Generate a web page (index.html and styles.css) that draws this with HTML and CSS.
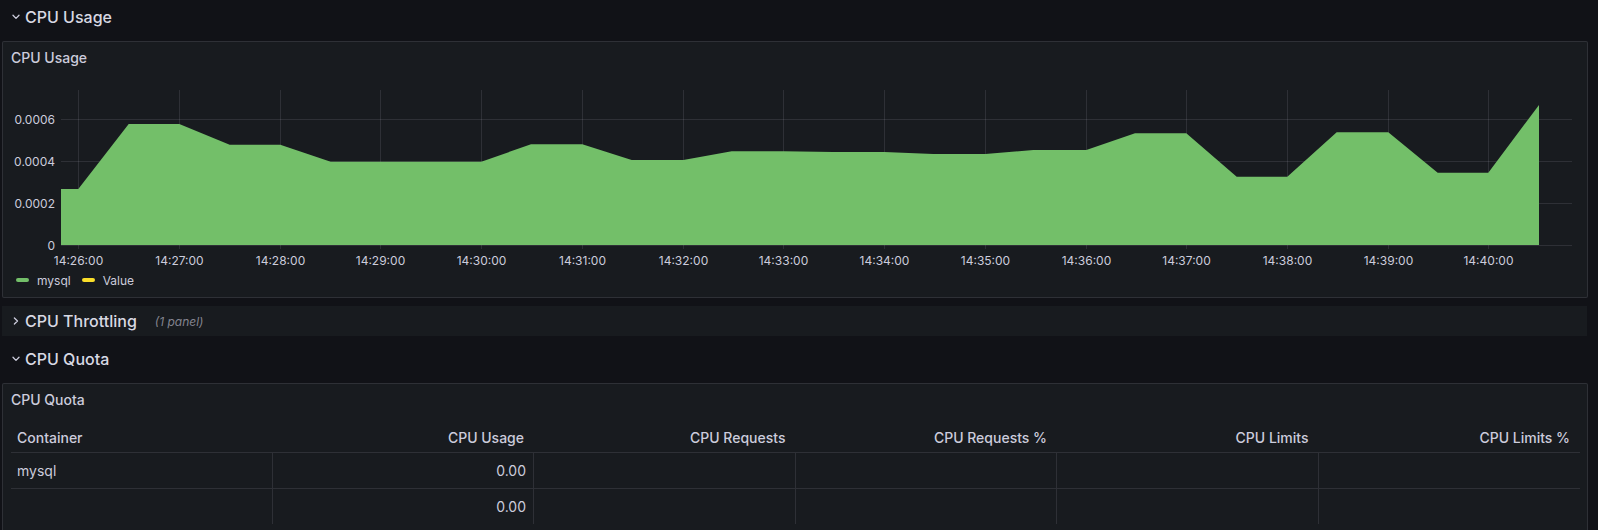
FILE: index.html
```html
<!DOCTYPE html>
<html lang="en">
<head>
<meta charset="utf-8">
<title>CPU dashboard</title>
<link rel="stylesheet" href="styles.css">
</head>
<body>
<div class="dash">
  <div class="row-header">
    <svg class="chev" width="8" height="8" viewBox="0 0 8 8"><path d="M1 2.3 L4 5.4 L7 2.3" /></svg>
    <span class="row-title">CPU Usage</span>
  </div>

  <section class="panel panel-graph">
    <div class="panel-head">CPU Usage</div>
    <svg class="chart" width="1584" height="195" viewBox="3 73 1584 195">
      <g class="grid">
        <line x1="61" y1="119.5" x2="1572" y2="119.5"/>
        <line x1="61" y1="161.5" x2="1572" y2="161.5"/>
        <line x1="61" y1="203.5" x2="1572" y2="203.5"/>
        <line x1="78.5" y1="90" x2="78.5" y2="249"/>
        <line x1="179.5" y1="90" x2="179.5" y2="249"/>
        <line x1="280.5" y1="90" x2="280.5" y2="249"/>
        <line x1="380.5" y1="90" x2="380.5" y2="249"/>
        <line x1="481.5" y1="90" x2="481.5" y2="249"/>
        <line x1="582.5" y1="90" x2="582.5" y2="249"/>
        <line x1="683.5" y1="90" x2="683.5" y2="249"/>
        <line x1="783.5" y1="90" x2="783.5" y2="249"/>
        <line x1="884.5" y1="90" x2="884.5" y2="249"/>
        <line x1="985.5" y1="90" x2="985.5" y2="249"/>
        <line x1="1086.5" y1="90" x2="1086.5" y2="249"/>
        <line x1="1186.5" y1="90" x2="1186.5" y2="249"/>
        <line x1="1287.5" y1="90" x2="1287.5" y2="249"/>
        <line x1="1388.5" y1="90" x2="1388.5" y2="249"/>
        <line x1="1488.5" y1="90" x2="1488.5" y2="249"/>
      </g>
      <path class="area" d="M61,245 L61,189 L78.3,189 L128.7,124 L179.3,124 L229.7,144.7 L280.3,144.7 L330.7,161.7 L380.3,161.7 L431,161.7 L481.3,161.7 L531,144.3 L582.3,144.3 L631.7,160 L683.3,160 L731.7,151.3 L783.3,151.3 L833.3,152 L884.3,152 L933.3,154 L985.3,154 L1033.3,150 L1086.3,150 L1135,133.3 L1186.3,133.3 L1236.7,176.7 L1287.3,176.7 L1336.7,132.3 L1388.3,132.3 L1437.7,172.7 L1488.3,172.7 L1539,105 L1539,245 Z"/>
      <line class="axis" x1="61" y1="245.5" x2="1572" y2="245.5"/>
      <g class="ylab">
        <text x="55" y="119">0.0006</text>
        <text x="55" y="161">0.0004</text>
        <text x="55" y="203">0.0002</text>
        <text x="55" y="245">0</text>
      </g>
      <g class="xlab">
        <text x="78.5" y="260">14:26:00</text>
        <text x="179.5" y="260">14:27:00</text>
        <text x="280.5" y="260">14:28:00</text>
        <text x="380.5" y="260">14:29:00</text>
        <text x="481.5" y="260">14:30:00</text>
        <text x="582.5" y="260">14:31:00</text>
        <text x="683.5" y="260">14:32:00</text>
        <text x="783.5" y="260">14:33:00</text>
        <text x="884.5" y="260">14:34:00</text>
        <text x="985.5" y="260">14:35:00</text>
        <text x="1086.5" y="260">14:36:00</text>
        <text x="1186.5" y="260">14:37:00</text>
        <text x="1287.5" y="260">14:38:00</text>
        <text x="1388.5" y="260">14:39:00</text>
        <text x="1488.5" y="260">14:40:00</text>
      </g>
    </svg>
    <div class="legend">
      <span class="legend-item"><i class="swatch swatch-green"></i>mysql</span>
      <span class="legend-item"><i class="swatch swatch-yellow"></i>Value</span>
    </div>
  </section>

  <div class="row-header row-collapsed">
    <svg class="chev" width="8" height="8" viewBox="0 0 8 8"><path d="M2.4 1 L5.5 4 L2.4 7" /></svg>
    <span class="row-title">CPU Throttling</span>
    <span class="row-count">(1 panel)</span>
  </div>

  <div class="row-header row-quota">
    <svg class="chev" width="8" height="8" viewBox="0 0 8 8"><path d="M1 2.3 L4 5.4 L7 2.3" /></svg>
    <span class="row-title">CPU Quota</span>
  </div>

  <section class="panel panel-table">
    <div class="panel-head">CPU Quota</div>
    <div class="table">
      <div class="tr th">
        <div class="cell left">Container</div>
        <div class="cell">CPU Usage</div>
        <div class="cell">CPU Requests</div>
        <div class="cell">CPU Requests %</div>
        <div class="cell">CPU Limits</div>
        <div class="cell">CPU Limits %</div>
      </div>
      <div class="tr td">
        <div class="cell left">mysql</div>
        <div class="cell">0.00</div>
        <div class="cell"></div>
        <div class="cell"></div>
        <div class="cell"></div>
        <div class="cell"></div>
      </div>
      <div class="tr td">
        <div class="cell left"></div>
        <div class="cell">0.00</div>
        <div class="cell"></div>
        <div class="cell"></div>
        <div class="cell"></div>
        <div class="cell"></div>
      </div>
    </div>
  </section>
</div>
</body>
</html>
```

FILE: styles.css
```css
html, body {
  margin: 0;
  padding: 0;
  background: #111217;
  height: 100%;
  overflow: hidden;
}

body {
  font-family: Inter, "Noto Sans", "Liberation Sans", sans-serif;
  color: #ccccdc;
}

.dash {
  display: flex;
  flex-direction: column;
  padding: 2px 10px 0 2px;
}

.row-header {
  height: 30px;
  display: flex;
  align-items: center;
  padding-left: 10px;
  flex-shrink: 0;
}

.chev {
  width: 8px;
  height: 8px;
  margin-right: 5px;
  flex-shrink: 0;
}

.chev path {
  fill: none;
  stroke: #ccccdc;
  stroke-width: 1.3;
  stroke-linecap: round;
  stroke-linejoin: round;
}

.row-title {
  font-size: 16px;
  font-weight: 500;
  color: #d8d9e3;
}

.row-count {
  margin-left: 18px;
  font-size: 12px;
  font-style: italic;
  color: rgba(204, 204, 220, 0.6);
}

.row-collapsed {
  margin-top: 8px;
  background: #181b1f;
  margin-right: 1px;
}

.row-quota {
  margin-top: 8px;
}

.panel {
  margin-top: 9px;
  background: #181b1f;
  border: 1px solid rgba(204, 204, 220, 0.12);
  border-radius: 2px;
  flex-shrink: 0;
}

.panel-table {
  padding-bottom: 40px;
}

.panel-head {
  height: 31px;
  display: flex;
  align-items: center;
  padding-left: 8px;
  font-size: 14px;
  font-weight: 500;
  color: #ccccdc;
}

.chart {
  display: block;
}

.grid line {
  stroke: rgba(204, 204, 220, 0.12);
  stroke-width: 1;
}

.axis {
  stroke: rgba(204, 204, 220, 0.12);
  stroke-width: 1;
}

.area {
  fill: #73bf69;
}

.ylab text,
.xlab text {
  font-family: Inter, "Noto Sans", "Liberation Sans", sans-serif;
  font-size: 12px;
  fill: #ccccdc;
  dominant-baseline: central;
}

.ylab text {
  text-anchor: end;
}

.xlab text {
  text-anchor: middle;
}

.legend {
  height: 24px;
  display: flex;
  align-items: center;
  padding-left: 13px;
  margin-bottom: 5px;
  gap: 11px;
  font-size: 12px;
  color: #ccccdc;
}

.legend-item {
  display: flex;
  align-items: center;
}

.swatch {
  display: inline-block;
  width: 13px;
  height: 4px;
  border-radius: 2px;
  margin-right: 8px;
}

.swatch-green {
  background: #73bf69;
}

.swatch-yellow {
  background: #fade2a;
}

.table {
  margin: 0 7px 0 8px;
}

.tr {
  display: grid;
  grid-template-columns: repeat(6, 1fr);
  border-bottom: 1px solid rgba(204, 204, 220, 0.12);
}

.tr:last-child {
  border-bottom: none;
}

.th {
  height: 37px;
  font-weight: 500;
  font-size: 14px;
}

.th .cell {
  padding: 8px 10px 0 6px;
}

.td {
  height: 35px;
  font-size: 14px;
}

.cell {
  display: flex;
  align-items: center;
  justify-content: flex-end;
  padding: 0 7px 0 6px;
  color: #ccccdc;
}

.cell.left {
  justify-content: flex-start;
}

.td .cell {
  border-right: 1px solid rgba(204, 204, 220, 0.12);
}

.td .cell:last-child {
  border-right: none;
}
```
